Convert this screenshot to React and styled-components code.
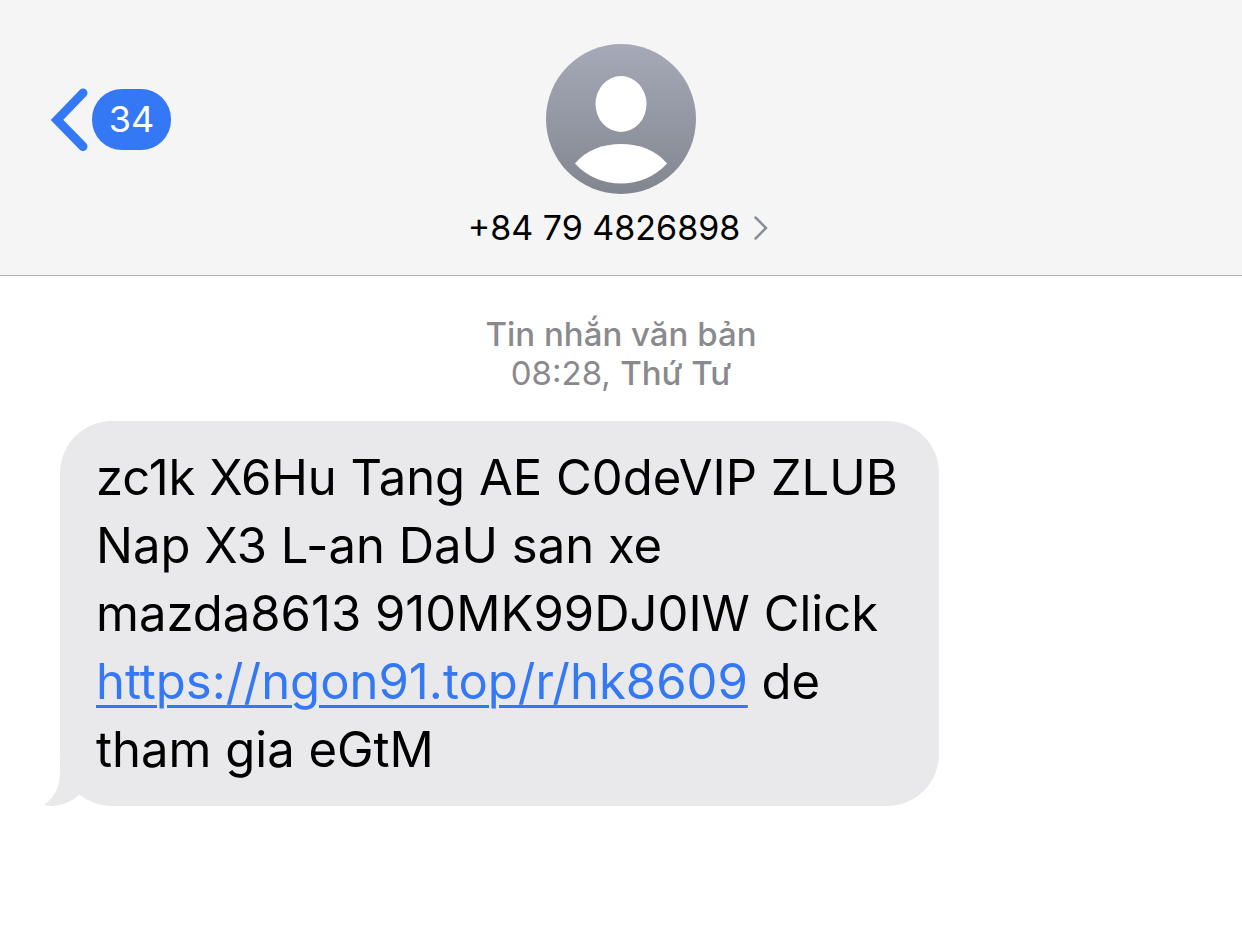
import React from "react";
import styled, { createGlobalStyle } from "styled-components";

const App = () => {
  return (
    <Screen>
      <GlobalStyle />
      <Header>
        <BackButton type="button" aria-label="Back, 34 unread">
          <BackArrow viewBox="0 0 38 64" aria-hidden="true">
            <path d="M33 6 L7 33 L33 59.500" />
          </BackArrow>
          <Badge>34</Badge>
        </BackButton>
        <Contact type="button">
          <Avatar viewBox="0 0 150 150" aria-hidden="true">
            <defs>
              <linearGradient id="avatar" x1="0" y1="0" x2="0" y2="1">
                <stop offset="0" stopColor="#a6aab8" />
                <stop offset="1" stopColor="#82868f" />
              </linearGradient>
            </defs>
            <circle cx="75" cy="75" r="75" fill="url(#avatar)" />
            <ellipse cx="75" cy="60" rx="25.5" ry="28" fill="#fff" />
            <path
              d="M29 119.500 C40 106 57 100 75 100 C93 100 110 106 121 119.500 C109 133 92 139.500 75 139.500 C58 139.500 41 133 29 119.500 Z"
              fill="#fff"
            />
          </Avatar>
          <ContactName>
            +84 79 4826898
            <Chevron viewBox="0 0 14 24" aria-hidden="true">
              <path d="M1.500 1.500 L12 12 L1.500 22.500" />
            </Chevron>
          </ContactName>
        </Contact>
      </Header>
      <Thread>
        <Stamp>
          <strong>Tin nhắn văn bản</strong>
          <span>
            08:28, <strong>Thứ Tư</strong>
          </span>
        </Stamp>
        <Bubble>
          zc1k X6Hu Tang AE C0deVIP ZLUB Nap X3 L-an DaU san xe mazda8613
          910MK99DJ0IW Click{" "}
          <MessageLink href="https://ngon91.top/r/hk8609">
            https://ngon91.top/r/hk8609
          </MessageLink>{" "}
          de tham gia eGtM
          <Tail viewBox="0 0 60 50" aria-hidden="true">
            <path d="M16 0 V14 C16 29 12 39 0 48 C13 51 26 46 35 38 L50 24 V0 Z" />
          </Tail>
        </Bubble>
      </Thread>
    </Screen>
  );
};

export default App;

const GlobalStyle = createGlobalStyle`
  * {
    box-sizing: border-box;
  }
  body {
    margin: 0;
    background: #fff;
    color: #000;
    font-family: Inter, "Liberation Sans", sans-serif;
  }
  button {
    border: 0;
    padding: 0;
    background: none;
    color: inherit;
    font: inherit;
    cursor: pointer;
  }
`;
const Screen = styled.div`
  width: 100%;
  min-height: 100vh;
`;
const Header = styled.header`
  display: grid;
  grid-template-columns: 1fr auto 1fr;
  align-items: start;
  padding: 44px 50px 24px;
  background: #f5f5f5;
  border-bottom: 1px solid #b2b2b4;
`;
const BackButton = styled.button`
  display: flex;
  align-items: center;
  justify-self: start;
  gap: 4px;
  height: 150px;
`;
const BackArrow = styled.svg`
  width: 38px;
  height: 64px;
  fill: none;
  stroke: #3478f6;
  stroke-width: 9;
  stroke-linecap: round;
`;
const Badge = styled.span`
  width: 79px;
  border-radius: 30px;
  background: #3478f6;
  color: #fff;
  font-size: 36px;
  line-height: 61px;
  text-align: center;
`;
const Contact = styled.button`
  display: flex;
  flex-direction: column;
  align-items: center;
  gap: 12px;
`;
const Avatar = styled.svg`
  width: 150px;
  height: 150px;
`;
const ContactName = styled.span`
  display: flex;
  align-items: center;
  gap: 14px;
  padding: 0 6px 1px 0;
  font-size: 34px;
  line-height: 44px;
`;
const Chevron = styled.svg`
  width: 14px;
  height: 24px;
  fill: none;
  stroke: #8a8e98;
  stroke-width: 2.500;
  stroke-linecap: round;
`;
const Thread = styled.main`
  padding: 39px 60px;
`;
const Stamp = styled.div`
  display: flex;
  flex-direction: column;
  align-items: center;
  margin-bottom: 28px;
  color: #8a8a8e;
  font-size: 33px;
  line-height: 39px;

  strong {
    font-weight: 500;
  }
`;
const Bubble = styled.div`
  position: relative;
  width: 879px;
  max-width: 100%;
  padding: 23px 24px 22px 36px;
  border-radius: 52px;
  background: #e9e9eb;
  font-size: 49px;
  line-height: 68px;
`;
const MessageLink = styled.a`
  color: #3478f6;
  text-decoration-thickness: 3px;
  text-underline-offset: 6px;
`;
const Tail = styled.svg`
  position: absolute;
  left: -16px;
  bottom: -1px;
  width: 60px;
  height: 50px;
  fill: #e9e9eb;
`;
